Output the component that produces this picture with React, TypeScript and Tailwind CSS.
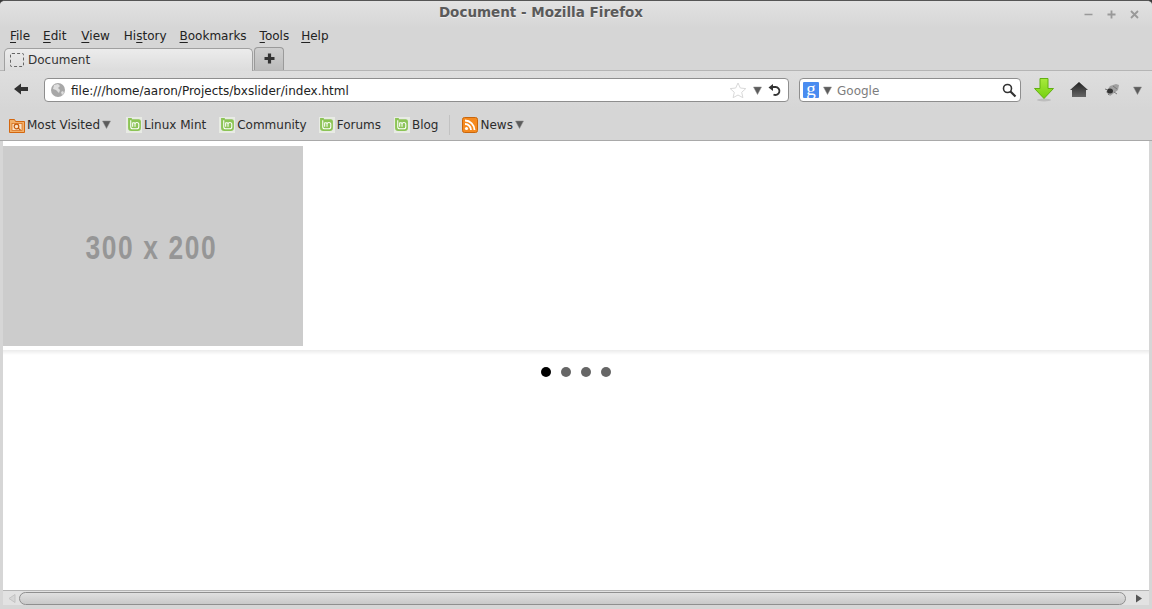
import React from "react";

const font = { fontFamily: '"DejaVu Sans", sans-serif' };

function Tri({ className = "" }: { className?: string }) {
  return (
    <svg width="9" height="9" viewBox="0 0 9 9" className={className}>
      <path d="M0.500 1h8L4.500 8.500z" fill="#5c5c5c" stroke="#8a8a8a" strokeWidth="0.500" />
    </svg>
  );
}

function Mint() {
  return (
    <span className="w-[16px] h-[16px] bg-[#e8ebe4] flex items-center justify-center shrink-0">
      <svg width="15" height="15" viewBox="0 0 14 14">
        <path d="M1 1h3.500v1H11a2 2 0 0 1 2 2v6a3 3 0 0 1-3 3H4a3 3 0 0 1-3-3z" fill="#8cc456" />
        <path d="M3.500 3v6a2 2 0 0 0 2 2h3.500a2 2 0 0 0 2-2V6.500a1.800 1.800 0 0 0-3.500 0V9M7.500 6.500a1.500 1.500 0 0 0-2.200-1V9" fill="none" stroke="#fff" strokeWidth="1" />
      </svg>
    </span>
  );
}

function Bookmark({ label, ml }: { label: string; ml: string }) {
  return (
    <div className={`flex items-center ${ml}`}>
      <Mint />
      <span className="ml-[2px] text-[#2c2c2c]">{label}</span>
    </div>
  );
}

function MenuItem({ pre = "", u, post, ml }: { pre?: string; u: string; post: string; ml: string }) {
  return (
    <span className={ml}>
      {pre}
      <span className="underline underline-offset-2">{u}</span>
      {post}
    </span>
  );
}

export default function App() {
  return (
    <div className="w-[1152px] h-[609px] bg-[#3a3a3a] overflow-hidden text-[12px] leading-none" style={font}>
      <div className="w-full h-full rounded-t-[5px] border-t border-t-[#555] flex flex-col bg-[#d6d6d6] pl-[3px] pr-[3px] pb-[4px] overflow-hidden">
        {/* title bar */}
        <div className="h-[27px] -mx-[3px] pr-[70px] shrink-0 relative flex items-center justify-center bg-gradient-to-b from-[#e2e2e2] to-[#d6d6d6]">
          <span className="text-[13.500px] font-bold text-[#5a5a5a] mb-[3px] [text-shadow:0_1px_0_#eee]">Document - Mozilla Firefox</span>
          <div className="absolute right-[12px] top-[8px] flex items-center gap-[12px]">
            <svg width="11" height="11" viewBox="0 0 11 11"><path d="M1.500 5.500h8" stroke="#999" strokeWidth="1.600" /></svg>
            <svg width="11" height="11" viewBox="0 0 11 11"><path d="M1.500 5.500h8M5.500 1.500v8" stroke="#999" strokeWidth="1.800" /></svg>
            <svg width="11" height="11" viewBox="0 0 11 11"><path d="M2 2l7 7M9 2l-7 7" stroke="#999" strokeWidth="1.800" /></svg>
          </div>
        </div>
        {/* menu */}
        <div className="h-[19px] shrink-0 flex items-center pl-[7px] text-[#222] pb-[4px]">
          <MenuItem u="F" post="ile" ml="" />
          <MenuItem u="E" post="dit" ml="ml-[13px]" />
          <MenuItem u="V" post="iew" ml="ml-[15px]" />
          <MenuItem pre="Hi" u="s" post="tory" ml="ml-[14px]" />
          <MenuItem u="B" post="ookmarks" ml="ml-[13px]" />
          <MenuItem u="T" post="ools" ml="ml-[13px]" />
          <MenuItem u="H" post="elp" ml="ml-[12px]" />
        </div>
        {/* tabs */}
        <div className="h-[24px] shrink-0 flex items-end relative -mx-[3px] px-[3px] border-b border-[#b5b5b5]">
          <div className="w-[249px] h-[23px] -mb-[1px] rounded-t-[5px] border border-b-0 border-[#a0a0a0] bg-gradient-to-b from-[#ececec] to-[#dcdcdc] flex items-center pl-[5px] pb-[1px] relative z-10 ml-[1px]">
            <span className="w-[14px] h-[14px] rounded-[2px] border border-dashed border-[#666]" />
            <span className="ml-[4px] text-[#333]">Document</span>
          </div>
          <div className="w-[30px] h-[23px] ml-[1px] pb-[2px] rounded-t-[4px] border border-b-0 border-[#9a9a9a] bg-gradient-to-b from-[#cfcfcf] to-[#bcbcbc] flex items-center justify-center">
            <svg width="11" height="11" viewBox="0 0 11 11"><path d="M5.500 0.500v10M0.500 5.500h10" stroke="#333" strokeWidth="3.200" /></svg>
          </div>
        </div>
        {/* nav */}
        <div className="h-[38px] shrink-0 flex items-center bg-gradient-to-b from-[#dedede] to-[#d6d6d6] -mx-[3px] pl-[14px] pr-[9px]">
          <svg width="14" height="12" viewBox="0 0 14 12" className="shrink-0 -mt-[2px]">
            <path d="M0 6l7-5.500V4h7v4H7v3.500z" fill="#333" />
          </svg>
          <div className="ml-[16px] w-[745px] h-[24px] bg-white rounded-[4px] border border-[#8e8e8e] flex items-center pl-[5px] pr-[5px] shrink-0">
            <svg width="16" height="16" viewBox="0 0 16 16" className="shrink-0">
              <circle cx="8" cy="8" r="7" fill="#a8a8a8" />
              <path d="M4 3l4-1 2 2-2 2 2 2-1 3-3-3-3-1zM11 10l2-1 1 2-2 2z" fill="#dedede" />
            </svg>
            <span className="ml-[5px] pt-[1px] text-[#222]">file:///home/aaron/Projects/bxslider/index.html</span>
            <svg width="18" height="17" viewBox="0 0 18 17" className="ml-auto">
              <path d="M9 1l2.300 5 5.500.6-4.100 3.700 1.200 5.400L9 13l-4.900 2.700 1.200-5.400L1.200 6.600 6.700 6z" fill="#fff" stroke="#d8d8d8" strokeWidth="1" />
            </svg>
            <Tri className="ml-[6px]" />
            <svg width="14" height="13" viewBox="0 0 14 13" className="ml-[6px] mr-[1px]">
              <path d="M4 3h3.500a4 4 0 1 1-2 7.500" fill="none" stroke="#333" strokeWidth="1.800" />
              <path d="M0.500 3.500l4.500-3.500v7z" fill="#333" />
            </svg>
          </div>
          <div className="ml-[10px] w-[222px] h-[24px] bg-white rounded-[4px] border border-[#8e8e8e] flex items-center pl-[3px] pr-[3px] shrink-0">
            <span className="w-[16px] h-[16px] bg-[#4a8cf0] rounded-[1px] flex items-center justify-center text-white text-[19px] pb-[3px] shrink-0" style={{ fontFamily: '"Liberation Serif", serif' }}>g</span>
            <Tri className="ml-[4px]" />
            <span className="ml-[5px] pt-[1px] text-[#7d7d7d]">Google</span>
            <svg width="15" height="15" viewBox="0 0 15 15" className="ml-auto">
              <circle cx="5.500" cy="5.500" r="4" fill="none" stroke="#333" strokeWidth="1.600" />
              <path d="M8.500 8.500l5 5" stroke="#333" strokeWidth="2.200" />
            </svg>
          </div>
          <svg width="22" height="26" viewBox="0 0 22 26" className="ml-[12px] shrink-0">
            <defs>
              <linearGradient id="g" x1="0" y1="0" x2="0" y2="1">
                <stop offset="0" stopColor="#a8ea3c" />
                <stop offset="1" stopColor="#74d010" />
              </linearGradient>
            </defs>
            <ellipse cx="11" cy="23" rx="7" ry="1.500" fill="#bdbdbd" />
            <path d="M7 1.500h8v10h5.500L11 21.500 1.500 11.500H7z" fill="url(#g)" stroke="#62b012" strokeWidth="1" />
          </svg>
          <svg width="18" height="16" viewBox="0 0 18 16" className="ml-[15px] shrink-0">
            <defs>
              <linearGradient id="h" x1="0" y1="0" x2="0" y2="1">
                <stop offset="0" stopColor="#222" />
                <stop offset="1" stopColor="#666" />
              </linearGradient>
            </defs>
            <path d="M9 0l9 8h-2v7H2V8H0z" fill="url(#h)" />
          </svg>
          <svg width="16" height="14" viewBox="0 0 16 14" className="ml-[16px] shrink-0">
            <path d="M2 9l4-6 6-2 3 1-1 5-4 3-4 3z" fill="#a0a0a0" />
            <ellipse cx="6" cy="8" rx="3" ry="2.500" fill="#333" />
            <path d="M9 3l4 3M1 6l3 1M4 12l2-2M10 9l3 2" stroke="#777" strokeWidth="1" />
          </svg>
          <Tri className="ml-[13px] shrink-0" />
        </div>
        {/* bookmarks */}
        <div className="h-[32px] shrink-0 flex items-center -mx-[3px] pl-[9px] border-b border-[#a9a9a9] text-[#2c2c2c]">
          <div className="flex items-center">
            <svg width="16" height="16" viewBox="0 0 16 16" className="shrink-0">
              <path d="M0.500 2.500h5l1 2h9v11H0.500z" fill="#f2b06a" stroke="#d4670f" strokeWidth="1" />
              <rect x="3" y="6.500" width="10" height="7" fill="#fbe3c8" stroke="#d4670f" strokeWidth="0.700" />
              <circle cx="7.500" cy="9.500" r="2.300" fill="none" stroke="#c45a0a" strokeWidth="1.200" />
              <path d="M9 11l2.500 2" stroke="#c45a0a" strokeWidth="1.200" />
            </svg>
            <span className="ml-[2px]">Most Visited</span>
            <Tri className="ml-[2px]" />
          </div>
          <Bookmark label="Linux Mint" ml="ml-[15px]" />
          <Bookmark label="Community" ml="ml-[13px]" />
          <Bookmark label="Forums" ml="ml-[12px]" />
          <Bookmark label="Blog" ml="ml-[13px]" />
          <span className="ml-[11px] w-px h-[20px] bg-[#c2c2c2]" />
          <div className="flex items-center ml-[12px]">
            <svg width="16" height="16" viewBox="0 0 16 16" className="shrink-0">
              <rect x="0.500" y="0.500" width="15" height="15" rx="2" fill="#f58a1f" stroke="#c9660c" />
              <circle cx="4.500" cy="11.500" r="1.600" fill="#fff" />
              <path d="M3 7a6 6 0 0 1 6 6M3 3.500a9.500 9.500 0 0 1 9.500 9.500" fill="none" stroke="#fff" strokeWidth="1.800" />
            </svg>
            <span className="ml-[2px]">News</span>
            <Tri className="ml-[2px]" />
          </div>
        </div>
        {/* page */}
        <div className="flex-1 bg-white min-h-0 flex flex-col">
          <div className="pt-[5px]">
            <div className="w-[300px] h-[200px] bg-[#cccccc] flex items-center justify-center pt-[3px] pr-[4px]">
              <span className="text-[33px] text-[#969696] font-bold tracking-[2px] scale-x-[0.8]" style={{ fontFamily: '"Liberation Sans", sans-serif' }}>300 x 200</span>
            </div>
          </div>
          <div className="h-[5px] mt-[4px] bg-gradient-to-b from-[#ebebeb] to-white" />
          <div className="flex justify-center gap-[10px] mt-[12px]">
            <span className="w-[10px] h-[10px] rounded-full bg-black" />
            <span className="w-[10px] h-[10px] rounded-full bg-[#666]" />
            <span className="w-[10px] h-[10px] rounded-full bg-[#666]" />
            <span className="w-[10px] h-[10px] rounded-full bg-[#666]" />
          </div>
        </div>
        {/* scrollbar */}
        <div className="h-[15px] shrink-0 bg-[#e2e2e2] border-t border-[#b5b5b5] flex items-center">
          <svg width="8" height="9" viewBox="0 0 8 9" className="ml-[5px] shrink-0"><path d="M7 0.500v8L1 4.500z" fill="#d6d6d6" stroke="#c4c4c4" /></svg>
          <div className="ml-[3px] flex-1 h-[13px] rounded-full border border-[#8f8f8f] bg-gradient-to-b from-[#e0e0e0] to-[#c9c9c9]" />
          <svg width="8" height="9" viewBox="0 0 8 9" className="ml-[9px] mr-[6px] shrink-0"><path d="M1 0.500v8l6-4z" fill="#555" /></svg>
        </div>
      </div>
    </div>
  );
}
